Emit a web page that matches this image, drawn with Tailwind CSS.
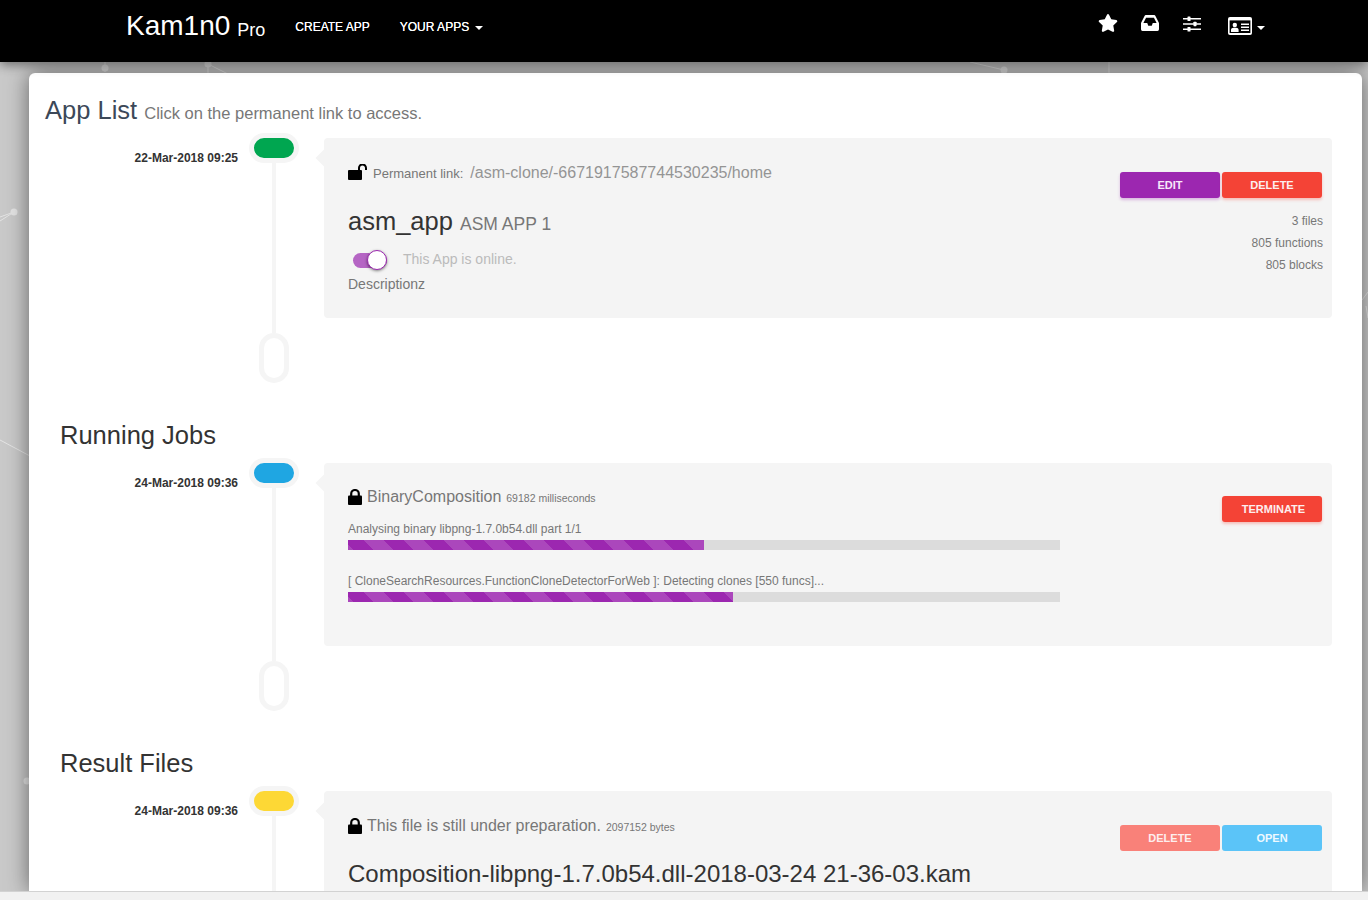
<!DOCTYPE html>
<html lang="en">
<head>
    <meta charset="UTF-8">
    <title>Kam1n0 Pro</title>
    <script src="https://cdn.jsdelivr.net/npm/@tailwindcss/browser@4"></script>
</head>
<body class="font-['Liberation_Sans',Arial,sans-serif] antialiased">
<div class="relative h-[900px] w-[1368px] overflow-hidden bg-[#c9c9c9]">
    <!-- network background -->
    <svg class="absolute inset-0" width="1368" height="900" fill="none" stroke="#e4e4e4" stroke-width="1">
        <path d="M105 62V72M208 64L232 76M208 64V74M970 62L1004 70M1109 62V74M14 212L0 217M14 212L0 221M0 440L30 456M1368 292L1362 300M1366 306L1368 318"/>
        <g fill="#e4e4e4" stroke="none">
            <circle cx="105" cy="68" r="3.5"/>
            <circle cx="208" cy="64" r="3.5"/>
            <circle cx="1004" cy="70" r="3.5"/>
            <circle cx="14" cy="212" r="3.5"/>
            <circle cx="27" cy="781" r="3.5"/>
        </g>
    </svg>

    <!-- navbar -->
    <nav class="relative z-10 flex h-[62px] items-start bg-black pl-[126px] text-white shadow-[0_3px_10px_rgba(0,0,0,.45)]">
        <a class="mt-[10px] text-[28px] leading-[32px]">Kam1n0</a>
        <a class="ml-[7px] mt-[19px] text-[18px] leading-[22px]">Pro</a>
        <a class="ml-[30px] mt-[19px] text-[12px] leading-[16px] [text-shadow:0_0_.6px_#fff]">CREATE APP</a>
        <a class="ml-[30px] mt-[19px] flex items-center text-[12px] leading-[16px] [text-shadow:0_0_.6px_#fff]">YOUR APPS
            <span class="ml-[6px] mt-[2px] border-x-4 border-t-4 border-x-transparent border-t-white"></span>
        </a>
        <div class="ml-[615px] mt-[14px] flex items-start">
            <svg class="h-[18px] w-[20px]" viewBox="0 0 576 512" fill="#fff"><path d="M259.3 17.8L194 150.2 47.9 171.5c-26.2 3.8-36.7 36.1-17.7 54.6l105.7 103-25 145.5c-4.5 26.3 23.2 46 46.4 33.7L288 439.6l130.7 68.7c23.2 12.2 50.9-7.4 46.4-33.7l-25-145.5 105.7-103c19-18.5 8.5-50.8-17.7-54.6L382 150.2 316.7 17.8c-11.7-23.6-45.6-23.9-57.4 0z"/></svg>
            <svg class="ml-[23px] mt-[1px] h-[16px] w-[18px]" viewBox="0 64 576 384" preserveAspectRatio="none" fill="#fff"><path d="M567.938 243.908L462.25 85.374A48.003 48.003 0 0 0 422.311 64H153.689a48 48 0 0 0-39.938 21.374L8.062 243.908A47.994 47.994 0 0 0 0 270.533V400c0 26.51 21.49 48 48 48h480c26.51 0 48-21.49 48-48V270.533a47.994 47.994 0 0 0-8.062-26.625zM162.252 128h251.497l85.333 128H376l-32 64H232l-32-64H76.918l85.334-128z"/></svg>
            <svg class="ml-[24px] mt-[2px] h-[16px] w-[18px]" viewBox="0 0 18 16" fill="#fff"><path d="M0 2h18v1.600H0zM0 7.200h18v1.600H0zM0 12.400h18V14H0z"/><rect x="4.500" y="0.500" width="3" height="4.500" rx=".6"/><rect x="10.500" y="5.700" width="3" height="4.500" rx=".6"/><rect x="4.500" y="11" width="3" height="4.500" rx=".6"/></svg>
            <svg class="ml-[27px] mt-[3px] h-[18px] w-[24px]" viewBox="0 0 24 18"><rect width="24" height="18" rx="2" fill="#fff"/><rect x="1.600" y="3.400" width="20.800" height="12.600" fill="#000"/><circle cx="6.800" cy="8" r="2.200" fill="#fff"/><path d="M3 15v-2c0-1.400 1.200-2.200 2.400-2.200h2.800c1.200 0 2.400.8 2.400 2.200v2z" fill="#fff"/><path d="M13 6.500h8v1.500h-8zM13 9.500h8V11h-8zM13 12.500h8V14h-8z" fill="#fff"/></svg>
            <span class="ml-[5px] mt-[12px] border-x-4 border-t-4 border-x-transparent border-t-white"></span>
        </div>
    </nav>

    <!-- main card -->
    <main class="relative ml-[29px] mt-[11px] h-[818px] w-[1333px] overflow-hidden rounded-t-md bg-white shadow-[0_0_22px_rgba(0,0,0,.5)]">
        <h2 class="pl-[16px] pt-[20px] text-[25.5px] leading-[34px] text-[#3c4858]">App List <small class="text-[16.5px] text-[#777]">Click on the permanent link to access.</small></h2>

        <!-- app row -->
        <div class="mt-[3px] flex h-[250px]">
            <div class="w-[209px] pt-[17px] text-right text-[12px] font-bold leading-[16px] text-[#333]">22-Mar-2018 09:25</div>
            <div class="flex w-[72px] flex-col items-center">
                <div class="h-[30px] w-[50px] rounded-full border-[5px] border-[#f5f5f5] bg-[#00a650]"></div>
                <div class="h-[170px] w-[4px] bg-[#f5f5f5]"></div>
                <div class="h-[50px] w-[30px] rounded-full border-[5px] border-[#f5f5f5]"></div>
            </div>
            <div class="relative ml-[14px] mt-[5px] flex h-[180px] w-[1008px] justify-between rounded bg-[#f4f4f4] pl-[24px] pr-[10px]">
                <span class="absolute -left-[6px] top-[14px] h-[12px] w-[12px] rotate-45 bg-[#f4f4f4]"></span>
                <div>
                    <div class="mt-[24px] flex items-center text-[#949494]">
                        <svg class="mb-[2px] h-[16px] w-[19px]" viewBox="0 0 19 16"><rect y="6" width="14" height="10" rx="1" fill="#000"/><path d="M11 6V4a3.500 3.500 0 0 1 7 0v2" fill="none" stroke="#000" stroke-width="2"/></svg>
                        <span class="ml-[6px] mt-[2px] text-[13px] text-[#777]">Permanent link:</span>
                        <span class="ml-[7px] text-[16px] leading-[20px]">/asm-clone/-6671917587744530235/home</span>
                    </div>
                    <div class="mt-[22px] text-[25.5px] leading-[30px] text-[#333]">asm_app <small class="text-[17.5px] text-[#777]">ASM APP 1</small></div>
                    <div class="mt-[11px] flex items-center pl-[5px]">
                        <div class="relative h-[15px] w-[34px] rounded-full bg-[#b565c4]">
                            <span class="absolute -top-[3px] right-0 h-[20px] w-[20px] rounded-full border border-[#9c27b0] bg-white shadow-[0_1px_3px_rgba(0,0,0,.5)]"></span>
                        </div>
                        <span class="ml-[16px] -translate-y-px text-[14px] text-[#bbb]">This App is online.</span>
                    </div>
                    <div class="mt-[3px] text-[14px] leading-[20px] text-[#777]">Descriptionz</div>
                </div>
                <div class="pt-[34px] text-right text-[12px] text-[#777]">
                    <div class="flex gap-[2px]">
                        <a class="flex h-[26px] w-[100px] items-center justify-center rounded-[3px] bg-[#9c27b0] text-[11px] font-bold text-[#f8e8fb] shadow-[0_2px_3px_rgba(156,39,176,.3)]">EDIT</a>
                        <a class="flex h-[26px] w-[100px] items-center justify-center rounded-[3px] bg-[#f44336] text-[11px] font-bold text-[#fdeeee] shadow-[0_2px_3px_rgba(244,67,54,.3)]">DELETE</a>
                    </div>
                    <div class="-mr-px mt-[12px] leading-[22px]">
                        <p>3 files</p>
                        <p>805 functions</p>
                        <p>805 blocks</p>
                    </div>
                </div>
            </div>
        </div>

        <h2 class="h-[75px] pl-[31px] pt-[35px] text-[25.5px] leading-[34px] text-[#333]">Running Jobs</h2>

        <!-- job row -->
        <div class="flex h-[253px]">
            <div class="w-[209px] pt-[17px] text-right text-[12px] font-bold leading-[16px] text-[#333]">24-Mar-2018 09:36</div>
            <div class="flex w-[72px] flex-col items-center">
                <div class="h-[30px] w-[50px] rounded-full border-[5px] border-[#f5f5f5] bg-[#1fa6e2]"></div>
                <div class="h-[173px] w-[4px] bg-[#f5f5f5]"></div>
                <div class="h-[50px] w-[30px] rounded-full border-[5px] border-[#f5f5f5]"></div>
            </div>
            <div class="relative ml-[14px] mt-[5px] flex h-[183px] w-[1008px] justify-between rounded bg-[#f5f5f5] pl-[24px] pr-[10px]">
                <span class="absolute -left-[6px] top-[14px] h-[12px] w-[12px] rotate-45 bg-[#f5f5f5]"></span>
                <div class="w-[712px]">
                    <div class="mt-[23px] flex items-center text-[#777]">
                        <svg class="h-[16px] w-[14px]" viewBox="0 0 14 16"><rect y="6.500" width="14" height="9.500" rx="1" fill="#000"/><path d="M3.200 7V4.800a3.800 3.800 0 0 1 7.600 0V7" fill="none" stroke="#000" stroke-width="2.200"/></svg>
                        <span class="ml-[5px] text-[16px] leading-[22px]">BinaryComposition</span>
                        <span class="ml-[5px] mt-[3px] text-[10.5px]">69182 milliseconds</span>
                    </div>
                    <div class="mt-[13px] text-[12px] leading-[16px] text-[#777]">Analysing binary libpng-1.7.0b54.dll part 1/1</div>
                    <div class="mt-[3px] h-[10px] bg-[#dcdcdc]">
                        <div class="h-full w-[356px] bg-[#9c27b0] bg-[linear-gradient(45deg,rgba(255,255,255,.15)_25%,transparent_25%,transparent_50%,rgba(255,255,255,.15)_50%,rgba(255,255,255,.15)_75%,transparent_75%,transparent)] bg-[length:40px_40px] bg-[position:16px_0]"></div>
                    </div>
                    <div class="mt-[23px] text-[12px] leading-[16px] text-[#777]">[ CloneSearchResources.FunctionCloneDetectorForWeb ]: Detecting clones [550 funcs]...</div>
                    <div class="mt-[3px] h-[10px] bg-[#dcdcdc]">
                        <div class="h-full w-[385px] bg-[#9c27b0] bg-[linear-gradient(45deg,rgba(255,255,255,.15)_25%,transparent_25%,transparent_50%,rgba(255,255,255,.15)_50%,rgba(255,255,255,.15)_75%,transparent_75%,transparent)] bg-[length:40px_40px] bg-[position:16px_0]"></div>
                    </div>
                </div>
                <div class="pt-[33px]">
                    <a class="flex h-[26px] w-[100px] items-center justify-center rounded-[3px] bg-[#f44336] pl-[3px] text-[11px] font-bold text-[#fdeeee] shadow-[0_2px_3px_rgba(244,67,54,.3)]">TERMINATE</a>
                </div>
            </div>
        </div>

        <h2 class="h-[75px] pl-[31px] pt-[35px] text-[25.5px] leading-[34px] text-[#333]">Result Files</h2>

        <!-- file row -->
        <div class="flex">
            <div class="w-[209px] pt-[17px] text-right text-[12px] font-bold leading-[16px] text-[#333]">24-Mar-2018 09:36</div>
            <div class="flex w-[72px] flex-col items-center">
                <div class="h-[30px] w-[50px] rounded-full border-[5px] border-[#f5f5f5] bg-[#fdd835]"></div>
                <div class="h-[120px] w-[4px] bg-[#f5f5f5]"></div>
            </div>
            <div class="relative ml-[14px] mt-[5px] flex h-[180px] w-[1008px] justify-between rounded bg-[#f4f4f4] pl-[24px] pr-[10px]">
                <span class="absolute -left-[6px] top-[14px] h-[12px] w-[12px] rotate-45 bg-[#f4f4f4]"></span>
                <div>
                    <div class="mt-[24px] flex items-center text-[#777]">
                        <svg class="h-[16px] w-[14px]" viewBox="0 0 14 16"><rect y="6.500" width="14" height="9.500" rx="1" fill="#000"/><path d="M3.200 7V4.800a3.800 3.800 0 0 1 7.600 0V7" fill="none" stroke="#000" stroke-width="2.200"/></svg>
                        <span class="ml-[5px] text-[16px] leading-[22px]">This file is still under preparation.</span>
                        <span class="ml-[5px] mt-[3px] text-[10.5px]">2097152 bytes</span>
                    </div>
                    <div class="mt-[22px] text-[24px] leading-[30px] text-[#333]">Composition-libpng-1.7.0b54.dll-2018-03-24 21-36-03.kam</div>
                </div>
                <div class="pt-[34px]">
                    <div class="flex gap-[2px]">
                        <a class="flex h-[26px] w-[100px] items-center justify-center rounded-[3px] bg-[#f98179] text-[11px] font-bold text-[#fdeeee]">DELETE</a>
                        <a class="flex h-[26px] w-[100px] items-center justify-center rounded-[3px] bg-[#5bc4f8] text-[11px] font-bold text-[#eef9ff]">OPEN</a>
                    </div>
                </div>
            </div>
        </div>
    </main>

    <!-- bottom strip -->
    <div class="absolute bottom-0 left-0 right-0 z-10 h-[9px] border-t border-[#d2d2d2] bg-[#f1f1f1]"></div>
</div>
</body>
</html>
